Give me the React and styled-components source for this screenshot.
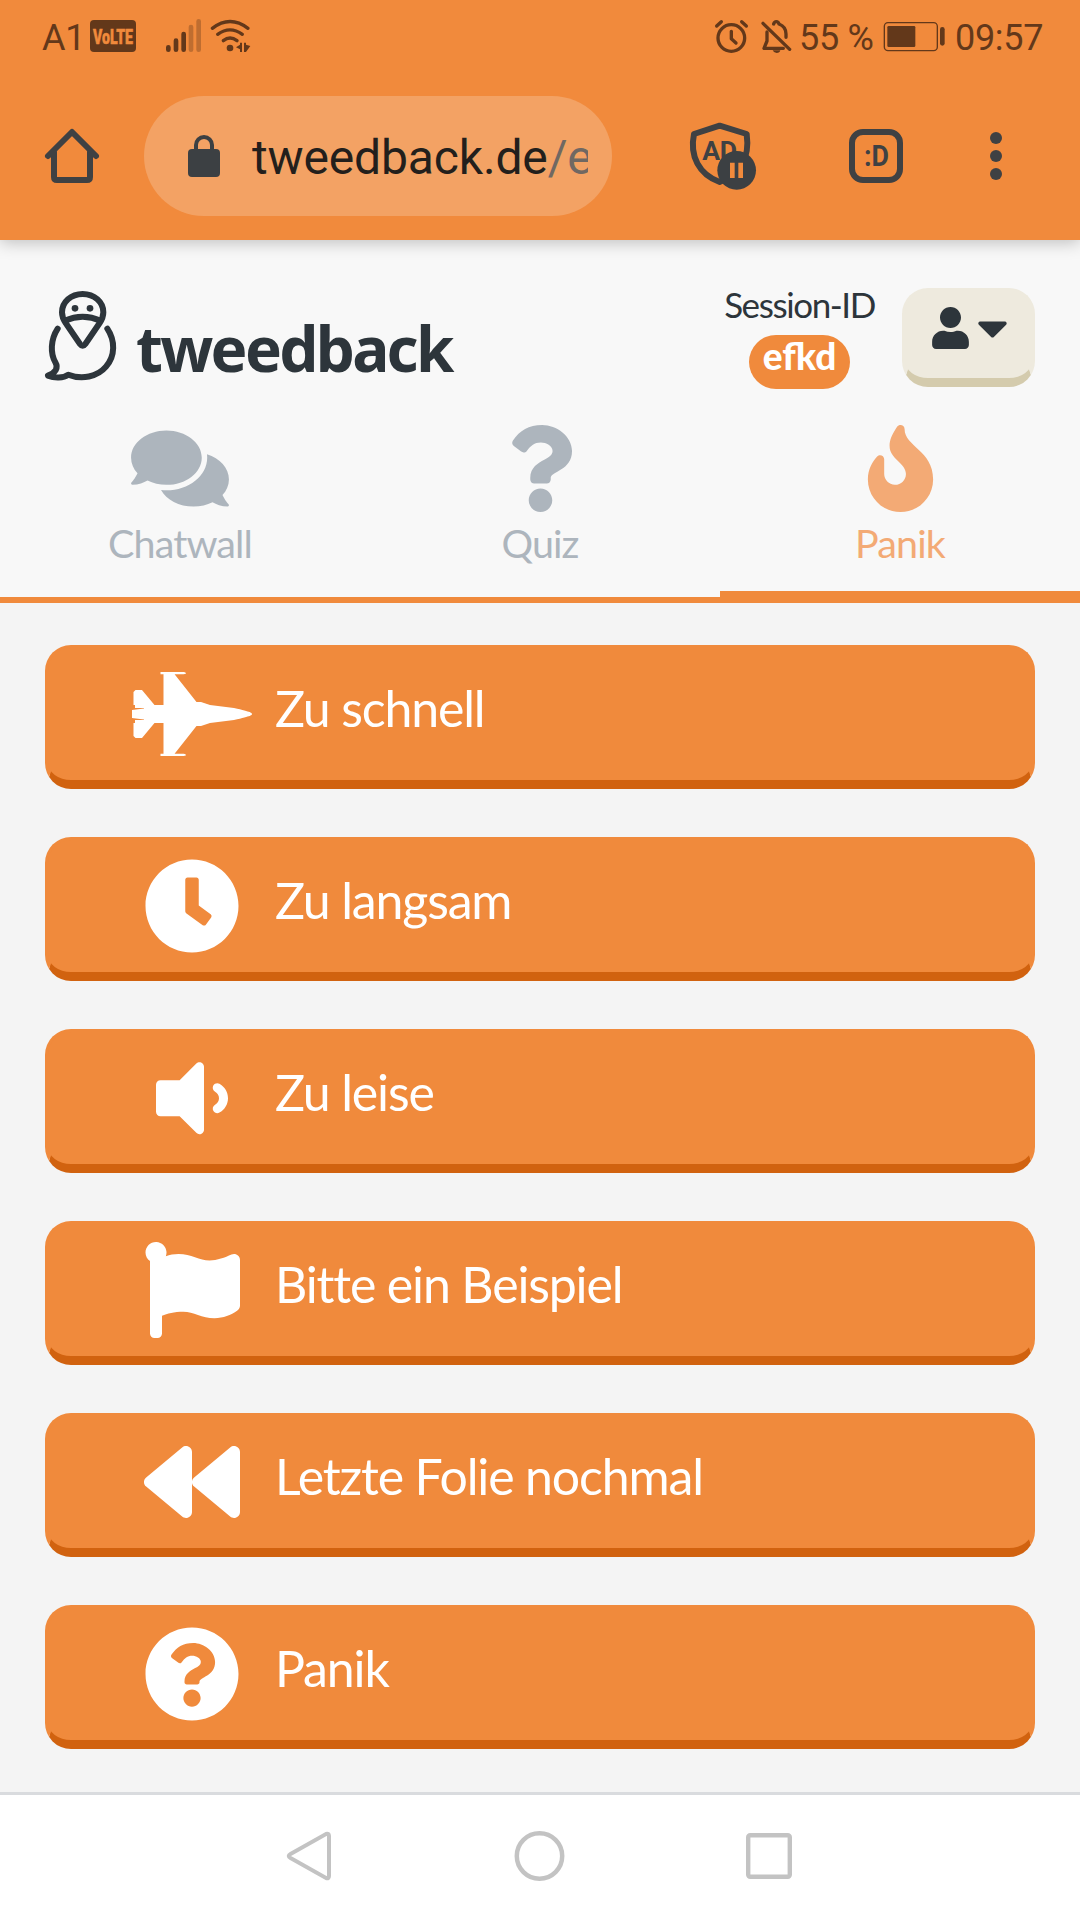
import styled, { createGlobalStyle } from "styled-components";
import {
  FaBackward,
  FaCaretDown,
  FaComments,
  FaFighterJet,
  FaFire,
  FaFlag,
  FaQuestion,
  FaQuestionCircle,
  FaUser,
  FaVolumeDown,
} from "react-icons/fa";

const GlobalStyle = createGlobalStyle`
  body {
    margin: 0;
    background: #f4f4f4;
    font-family: Lato, "Liberation Sans", sans-serif;
  }

  svg {
    display: block;
    flex-shrink: 0;
    overflow: visible;
  }
`;

const Screen = styled.div`
  width: 1080px;
  height: 1920px;
  display: flex;
  flex-direction: column;
  overflow: hidden;
`;

const BrowserTop = styled.div`
  position: relative;
  height: 240px;
  background: #f18a3c;
  box-shadow: 0 2px 16px rgba(0, 0, 0, 0.25);
  font-family: Roboto, sans-serif;
`;

const StatusBar = styled.div`
  display: flex;
  justify-content: space-between;
  align-items: center;
  height: 72px;
  padding: 0 36px 0 42px;
  box-sizing: border-box;
  color: #63381a;
`;

const StatusGroup = styled.div`
  display: flex;
  align-items: center;
`;

const StatusText = styled.span`
  width: ${(props) => props.$width}px;
  padding-top: 3px;
  font-size: 36px;
  line-height: 42px;
  letter-spacing: -0.3px;
  white-space: nowrap;
`;

const StatusIcon = styled.svg`
  margin-right: ${(props) => props.$gap || 0}px;
`;

const AddressBar = styled.div`
  display: flex;
  align-items: center;
  height: 168px;
  padding: 0 78px 0 45px;
  box-sizing: border-box;
  color: #3f4143;
`;

const UrlPill = styled.div`
  display: flex;
  align-items: center;
  width: 468px;
  height: 120px;
  margin: 0 77px 0 45px;
  padding: 0 24px 0 44px;
  box-sizing: border-box;
  border-radius: 60px;
  background: #f3a264;
`;

const Url = styled.div`
  margin-left: 32px;
  padding-top: 4px;
  overflow: hidden;
  color: #231f1c;
  font-size: 48px;
  line-height: 60px;
  letter-spacing: -0.15px;
  white-space: nowrap;

  span {
    color: #706862;
  }
`;

const Toolbar = styled.div`
  display: flex;
  flex: 1;
  align-items: center;
  gap: 87px;
`;

const Header = styled.header`
  height: 357px;
  border-bottom: 6px solid #f08a3c;
  background: #f8f8f8;
`;

const HeaderRow = styled.div`
  display: flex;
  align-items: flex-start;
  height: 185px;
  padding: 48px 45px 0 44px;
  box-sizing: border-box;
  color: #2d353b;
`;

const Brand = styled.div`
  display: flex;
  flex: 1;
  padding-top: 2px;
`;

const BrandName = styled.div`
  margin: 14px 0 0 18px;
  font-family: "Noto Sans", sans-serif;
  font-size: 62px;
  font-weight: 700;
  line-height: 88px;
  letter-spacing: -2.7px;
`;

const Session = styled.div`
  display: flex;
  flex-direction: column;
  align-items: center;
  margin-right: 27px;
  font-size: 35px;
  line-height: 32px;
  letter-spacing: -1.4px;
`;

const SessionId = styled.div`
  width: 101px;
  height: 54px;
  margin-top: 15px;
  border-radius: 27px;
  background: #f08a3c;
  color: #fff;
  font-size: 37px;
  font-weight: 900;
  line-height: 42px;
  letter-spacing: 0;
  text-align: center;
`;

const KeyButton = styled.button`
  display: flex;
  align-items: center;
  box-sizing: border-box;
  border: 3px solid ${(props) => props.$face};
  border-bottom: 9px solid ${(props) => props.$edge};
  border-radius: 26px;
  background: ${(props) => props.$face};
  font-family: inherit;
`;

const UserButton = styled(KeyButton)`
  gap: 8px;
  width: 133px;
  height: 99px;
  padding: 0 0 14px 27px;
  color: #2d353b;
`;

const UserIcon = styled(FaUser)`
  width: 37px;
  height: 42px;
`;

const CaretIcon = styled(FaCaretDown)`
  width: 31px;
  height: 49px;
`;

const CommentsIcon = styled(FaComments)`
  width: 98px;
  height: 87px;
`;

const JetIcon = styled(FaFighterJet)`
  width: 120px;
  height: 96px;
`;

const Tabs = styled.nav`
  display: flex;
  height: 172px;
`;

const Tab = styled.div`
  display: flex;
  flex: 1;
  flex-direction: column;
  align-items: center;
  box-sizing: border-box;
  border-bottom: ${(props) => (props.$active ? "6px solid #f08a3c" : "0")};
  color: ${(props) => (props.$active ? "#f3aa75" : "#adb5bd")};
  font-size: 39.5px;
  line-height: 50px;
  letter-spacing: -0.9px;

  svg {
    margin-bottom: 6px;
  }
`;

const PanicList = styled.main`
  display: flex;
  flex: 1;
  flex-direction: column;
  gap: 48px;
  padding: 42px 45px 0;
`;

const PanicButton = styled(KeyButton)`
  width: 990px;
  height: 144px;
  padding: 0 0 0 84px;
  color: #fff;
  font-size: 50px;
`;

const PanicIcon = styled.span`
  display: flex;
  justify-content: center;
  width: 120px;
  margin-right: 23px;
  font-size: 96px;
`;

const PanicLabel = styled.span`
  padding-bottom: 12px;
  line-height: 60px;
  letter-spacing: -1.15px;
`;

const NavBar = styled.footer`
  display: flex;
  justify-content: center;
  align-items: center;
  gap: 182px;
  height: 128px;
  padding: 0 2px 4px 0;
  box-sizing: border-box;
  border-top: 3px solid #d9dbde;
  background: #fff;
`;

const VolteIcon = () => (
  <StatusIcon width="46" height="32" viewBox="0 0 46 32" $gap={29}>
    <rect width="46" height="32" rx="4" fill="#63381a" />
    <text
      x="3"
      y="23.5"
      fill="#f18a3c"
      stroke="#f18a3c"
      strokeWidth="0.5"
      fontSize="21"
      fontWeight="900"
      textLength="40"
      lengthAdjust="spacingAndGlyphs"
    >
      VoLTE
    </text>
  </StatusIcon>
);

const SignalIcon = () => (
  <StatusIcon width="37" height="36" viewBox="495 54 111 108" $gap={8}>
    <g stroke="#63381a" strokeWidth="14" strokeLinecap="round">
      <path d="M505 142v7M528 122v27M551 102v47" />
      <path d="M573 81v68M596 64v85" opacity="0.35" />
    </g>
  </StatusIcon>
);

const WifiIcon = () => (
  <StatusIcon width="41" height="36" viewBox="630 54 123 108">
    <g fill="none" stroke="#63381a" strokeWidth="10" strokeLinecap="round">
      <path d="M637 85Q690 44 744 85M653 103Q690 76 727 103M670 122Q690 106 711 122" />
    </g>
    <circle cx="690" cy="144" r="10" fill="#63381a" />
    <path
      d="M720 128h6v28h-6v-8l-12-6 12-8zM732 128h6v6l13 4-13 18h-6z"
      fill="#63381a"
    />
  </StatusIcon>
);

const AlarmIcon = () => (
  <StatusIcon width="35" height="36" viewBox="102 54 105 108" $gap={12}>
    <g
      fill="none"
      stroke="#63381a"
      strokeWidth="10"
      strokeLinecap="round"
      strokeLinejoin="round"
    >
      <circle cx="154" cy="114" r="40" />
      <path d="M110 78l14-13M199 78l-14-13M154 94v22l14 13" />
    </g>
  </StatusIcon>
);

const BellOffIcon = () => (
  <StatusIcon width="31" height="36" viewBox="243 54 93 108" $gap={7}>
    <g
      fill="none"
      stroke="#63381a"
      strokeWidth="10"
      strokeLinecap="round"
      strokeLinejoin="round"
    >
      <path d="M249 70l80 78" />
      <path d="M261 96v27l-9 22h58M281 72q2-7 8-7t8 7q21 8 21 30v10" />
    </g>
    <path d="M278 151h23q-2 8-11 8t-12-8z" fill="#63381a" />
  </StatusIcon>
);

const BatteryIcon = () => (
  <StatusIcon width="63" height="31" viewBox="609 63 189 93" $gap={9}>
    <rect
      x="613"
      y="68"
      width="159"
      height="84"
      rx="11"
      fill="none"
      stroke="#63381a"
      strokeWidth="4"
    />
    <rect x="622" y="78" width="84" height="63" rx="4" fill="#63381a" />
    <path d="M787 88v42" stroke="#63381a" strokeWidth="14" strokeLinecap="round" />
  </StatusIcon>
);

const HomeIcon = () => (
  <svg width="54" height="54" viewBox="0 0 54 54">
    <path
      d="M3 27L27 3l24 24M9 23v25q0 3 3 3h30q3 0 3-3V23"
      fill="none"
      stroke="#3f4143"
      strokeWidth="6"
      strokeLinecap="round"
      strokeLinejoin="round"
    />
  </svg>
);

const LockIcon = () => (
  <svg width="32" height="42" viewBox="0 0 32 42">
    <rect y="14" width="32" height="28" rx="4" fill="#3c4043" />
    <path
      d="M8 16v-6a8 8 0 0 1 16 0v6"
      fill="none"
      stroke="#3c4043"
      strokeWidth="4"
    />
  </svg>
);

const AdShieldIcon = () => (
  <svg width="73" height="68" viewBox="27 372 219 204">
    <path
      d="M119 383L200 408C210 480 180 530 119 552C58 530 28 475 42 408z"
      fill="none"
      stroke="#3f4143"
      strokeWidth="18"
      strokeLinejoin="round"
    />
    <text
      x="67"
      y="486"
      fill="#3f4143"
      fontSize="80"
      fontWeight="700"
      textLength="104"
    >
      AD
    </text>
    <circle cx="170" cy="517" r="58" fill="#3c4043" />
    <path d="M157 494v46M182 494v46" stroke="#f18a3c" strokeWidth="14" />
  </svg>
);

const TabCountIcon = () => (
  <svg width="54" height="54" viewBox="0 0 54 54">
    <rect
      x="3"
      y="3"
      width="48"
      height="48"
      rx="11"
      fill="none"
      stroke="#3f4143"
      strokeWidth="6"
    />
    <text
      x="15"
      y="37"
      fill="#3f4143"
      fontSize="30"
      fontWeight="700"
      textLength="25"
      lengthAdjust="spacingAndGlyphs"
    >
      :D
    </text>
  </svg>
);

const MenuIcon = () => (
  <svg width="12" height="48" viewBox="0 0 12 48">
    <circle cx="6" cy="6" r="6" fill="#3f4143" />
    <circle cx="6" cy="24" r="6" fill="#3f4143" />
    <circle cx="6" cy="42" r="6" fill="#3f4143" />
  </svg>
);

const BirdLogo = () => (
  <svg width="74" height="92" viewBox="132 90 222 276">
    <g
      fill="none"
      stroke="#2d353b"
      strokeWidth="18"
      strokeLinecap="round"
      strokeLinejoin="round"
    >
      <path d="M248 102C213 102 186 126 186 157C186 170 190 179 197 189L240 252Q248 263 256 252L299 189C306 179 310 170 310 157C310 126 283 102 248 102z" />
      <path
        d="M194 182Q248 158 302 182"
        strokeLinecap="butt"
      />
      <path d="M173 206C151 240 151 280 166 307C176 324 167 338 144 347C163 355 190 355 205 344C245 360 292 351 318 320C346 288 346 242 322 206" />
    </g>
    <circle cx="225" cy="145" r="10" fill="#2d353b" />
    <circle cx="270" cy="145" r="10" fill="#2d353b" />
  </svg>
);

const ClockIcon = () => (
  <svg width="96" height="96" viewBox="0 0 512 512" fill="currentColor">
    <path d="M256 8C119 8 8 119 8 256s111 248 248 248 248-111 248-248S393 8 256 8zm57.1 350.1L224.9 294c-3.1-2.3-4.9-5.9-4.9-9.7V116c0-6.6 5.4-12 12-12h48c6.6 0 12 5.4 12 12v137.7l63.5 46.2c5.4 3.9 6.5 11.4 2.6 16.8l-28.2 38.8c-3.9 5.3-11.4 6.5-16.8 2.6z" />
  </svg>
);

const panicItems = [
  { label: "Zu schnell", icon: <JetIcon /> },
  { label: "Zu langsam", icon: <ClockIcon /> },
  { label: "Zu leise", icon: <FaVolumeDown /> },
  { label: "Bitte ein Beispiel", icon: <FaFlag /> },
  { label: "Letzte Folie nochmal", icon: <FaBackward /> },
  { label: "Panik", icon: <FaQuestionCircle /> },
];

const App = () => {
  return (
    <Screen>
      <GlobalStyle />
      <BrowserTop>
        <StatusBar>
          <StatusGroup>
            <StatusText $width={48}>A1</StatusText>
            <VolteIcon />
            <SignalIcon />
            <WifiIcon />
          </StatusGroup>
          <StatusGroup>
            <AlarmIcon />
            <BellOffIcon />
            <StatusText $width={84}>55 %</StatusText>
            <BatteryIcon />
            <StatusText $width={89}>09:57</StatusText>
          </StatusGroup>
        </StatusBar>
        <AddressBar>
          <HomeIcon />
          <UrlPill>
            <LockIcon />
            <Url>
              tweedback.de<span>/e</span>
            </Url>
          </UrlPill>
          <Toolbar>
            <AdShieldIcon />
            <TabCountIcon />
            <MenuIcon />
          </Toolbar>
        </AddressBar>
      </BrowserTop>
      <Header>
        <HeaderRow>
          <Brand>
            <BirdLogo />
            <BrandName>tweedback</BrandName>
          </Brand>
          <Session>
            Session-ID
            <SessionId>efkd</SessionId>
          </Session>
          <UserButton $face="#eeeade" $edge="#d4cbad">
            <UserIcon />
            <CaretIcon />
          </UserButton>
        </HeaderRow>
        <Tabs>
          <Tab>
            <CommentsIcon />
            Chatwall
          </Tab>
          <Tab>
            <FaQuestion size={87} />
            Quiz
          </Tab>
          <Tab $active>
            <FaFire size={87} />
            Panik
          </Tab>
        </Tabs>
      </Header>
      <PanicList>
        {panicItems.map(({ label, icon }) => (
          <PanicButton key={label} $face="#f08a3c" $edge="#d1620f">
            <PanicIcon>{icon}</PanicIcon>
            <PanicLabel>{label}</PanicLabel>
          </PanicButton>
        ))}
      </PanicList>
      <NavBar>
        <svg width="46" height="50" viewBox="0 0 46 50">
          <path
            d="M4.5 23L40 3Q43 2 43 5v40q0 3-3 2L4.5 27Q1 25 4.5 23z"
            fill="none"
            stroke="#c3c3c3"
            strokeWidth="4"
          />
        </svg>
        <svg width="50" height="50" viewBox="0 0 50 50">
          <circle cx="25.5" cy="25" r="22.7" fill="none" stroke="#c3c3c3" strokeWidth="4.5" />
        </svg>
        <svg width="46" height="46" viewBox="0 0 46 46">
          <rect x="2.2" y="2.2" width="41.6" height="41.6" rx="2" fill="none" stroke="#c3c3c3" strokeWidth="4.4" />
        </svg>
      </NavBar>
    </Screen>
  );
};

export default App;
